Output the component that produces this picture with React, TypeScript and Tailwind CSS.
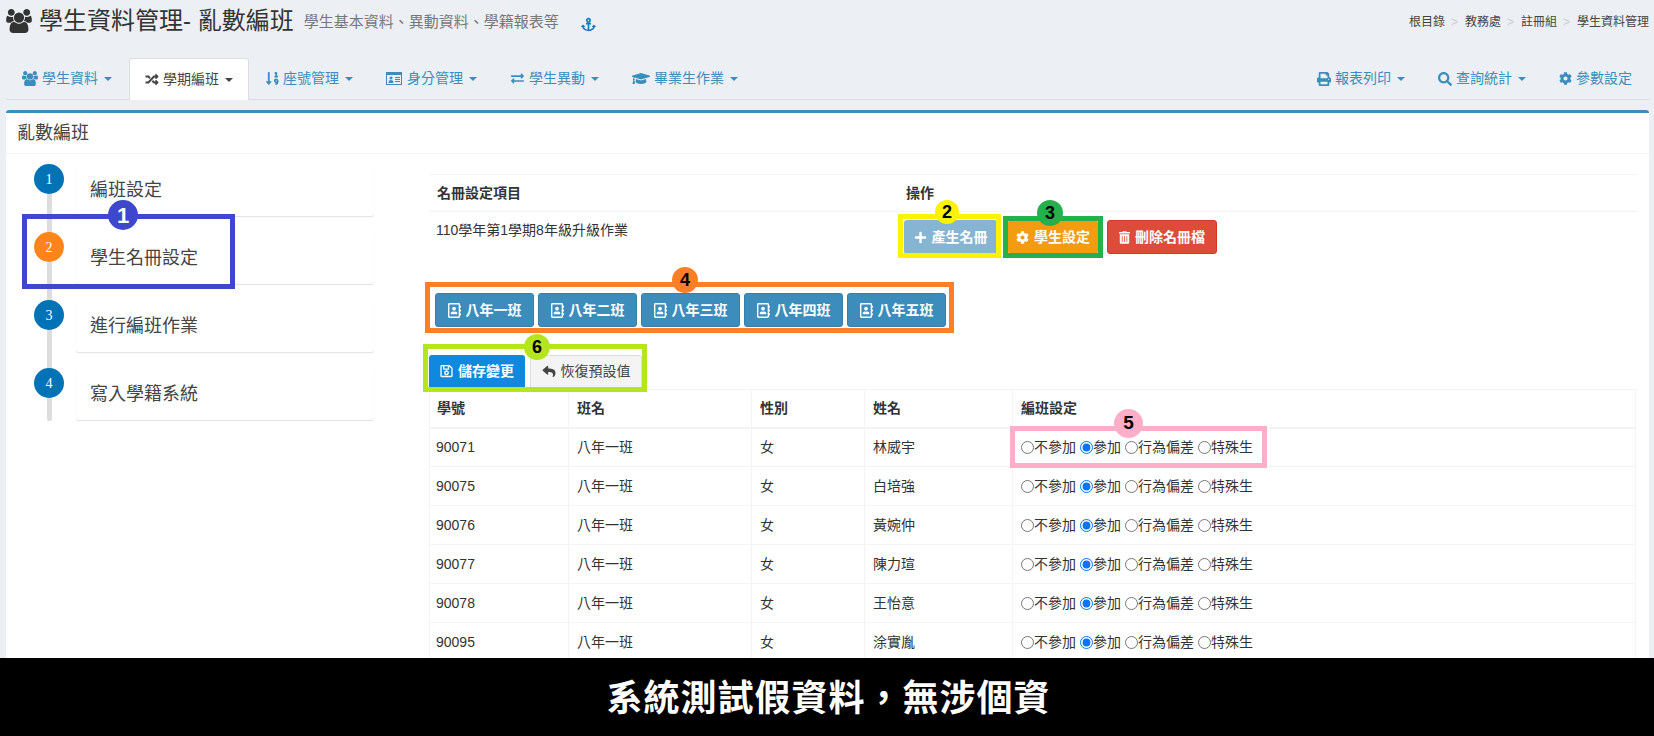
import { ReactNode } from "react";
import {
  FaAnchor,
  FaCog,
  FaExchangeAlt,
  FaGraduationCap,
  FaPlus,
  FaPrint,
  FaRandom,
  FaRegAddressBook,
  FaRegSave,
  FaReply,
  FaSearch,
  FaSortNumericDown,
  FaTrashAlt,
} from "react-icons/fa";

const FONT =
  "font-['Liberation_Sans','Noto_Sans_CJK_TC',sans-serif]";

// Font Awesome 4 風格的 users 圖示
const UsersIcon = ({ className }: { className: string }) => (
  <svg viewBox="0 0 1920 1792" fill="currentColor" className={className}>
    <path d="M593 896q-162 5-265 128h-134q-82 0-138-40.5t-56-118.5q0-353 124-353 6 0 43.5 21t97.5 42.5 119 21.5q67 0 133-23-5 37-5 66 0 139 81 256zm1071 637q0 120-73 189.5t-194 69.5h-874q-121 0-194-69.5t-73-189.5q0-53 3.5-103.5t14-109 26.5-108.5 43-97.5 62-81 85.5-53.5 111.5-20q10 0 43 21.5t73 48 107 48 135 21.5 135-21.5 107-48 73-48 43-21.5q61 0 111.5 20t85.5 53.5 62 81 43 97.5 26.5 108.5 14 109 3.5 103.5zm-1024-1277q0 106-75 181t-181 75-181-75-75-181 75-181 181-75 181 75 75 181zm704 384q0 159-112.5 271.5t-271.5 112.5-271.5-112.5-112.5-271.5 112.5-271.5 271.5-112.5 271.5 112.5 112.5 271.5zm576 225q0 78-56 118.5t-138 40.5h-134q-103-123-265-128 81-117 81-256 0-29-5-66 66 23 133 23 59 0 119-21.5t97.5-42.5 43.5-21q124 0 124 353zm-128-609q0 106-75 181t-181 75-181-75-75-181 75-181 181-75 181 75 75 181z" />
  </svg>
);

const IdCardIcon = ({ className }: { className: string }) => (
  <svg viewBox="0 0 16 13" fill="currentColor" className={className}>
    <rect x="0.5" y="0.5" width="15" height="12" fill="none" stroke="currentColor" />
    <rect x="1" y="1" width="14" height="2" />
    <circle cx="5" cy="6" r="1.5" />
    <path d="M2.5 11c0-2 1-3 2.5-3s2.5 1 2.5 3z" />
    <rect x="9" y="5" width="5" height="1" />
    <rect x="9" y="7" width="5" height="1" />
    <rect x="9" y="9" width="5" height="1" />
  </svg>
);

const leftTabs = [
  { label: "學生資料", icon: <UsersIcon className="w-[16px] h-[15px]" /> },
  { label: "學期編班", icon: <FaRandom className="w-[14px] h-[13px]" />, active: true },
  { label: "座號管理", icon: <FaSortNumericDown className="w-[13px] h-[17px]" /> },
  { label: "身分管理", icon: <IdCardIcon className="w-[16px] h-[13px] mr-[1px]" /> },
  { label: "學生異動", icon: <FaExchangeAlt className="w-[15px] h-[13px]" /> },
  { label: "畢業生作業", icon: <FaGraduationCap className="w-[18px] h-[15px]" /> },
];

const rightTabs = [
  { label: "報表列印", icon: <FaPrint className="w-[14px] h-[14px]" />, caret: true },
  { label: "查詢統計", icon: <FaSearch className="w-[14px] h-[14px]" />, caret: true },
  { label: "參數設定", icon: <FaCog className="w-[13px] h-[13px]" /> },
];

const steps = [
  { n: 1, label: "編班設定" },
  { n: 2, label: "學生名冊設定", current: true },
  { n: 3, label: "進行編班作業" },
  { n: 4, label: "寫入學籍系統" },
];

const classes = ["八年一班", "八年二班", "八年三班", "八年四班", "八年五班"];

const students = [
  { id: "90071", name: "林威宇" },
  { id: "90075", name: "白培強" },
  { id: "90076", name: "黃婉仲" },
  { id: "90077", name: "陳力瑄" },
  { id: "90078", name: "王怡意" },
  { id: "90095", name: "涂實胤" },
];

const radioOptions = ["不參加", "參加", "行為偏差", "特殊生"];

const Caret = () => (
  <span className="ml-[2px] w-0 h-0 border-x-4 border-t-4 border-x-transparent border-t-current" />
);

const Tab = ({
  label,
  icon,
  active,
  caret,
}: {
  label: string;
  icon: ReactNode;
  active?: boolean;
  caret?: boolean;
}) => (
  <div
    className={
      active
        ? "flex items-center h-[42px] px-[15px] gap-[4px] bg-white text-[#444] border-x border-t border-[#ddd] rounded-t-[3px] -mx-px"
        : "flex items-center h-[41px] px-[15px] gap-[4px] text-[#3c8dbc]"
    }
  >
    {icon}
    <span className="text-[14px]">{label}</span>
    {caret && <Caret />}
  </div>
);

const Btn = ({
  className,
  icon,
  children,
}: {
  className: string;
  icon: ReactNode;
  children: ReactNode;
}) => (
  <div
    className={`flex items-center justify-center gap-[5px] rounded-[3px] text-white text-[14px] font-bold ${className}`}
  >
    {icon}
    <span>{children}</span>
  </div>
);

export default function App() {
  return (
    <div className={`relative w-[1654px] h-[736px] overflow-hidden flex flex-col bg-[#ecf0f5] text-[#333] ${FONT}`}>
      <div className="flex-1 min-h-0 flex flex-col pl-[6px] pr-[5px]">
        <header className="h-[58px] shrink-0 flex items-start justify-between">
          <div className="flex items-center h-[42px]">
            <UsersIcon className="w-[26px] h-[24px] text-[#333]" />
            <h1 className="ml-[7px] text-[24px] leading-[30px]">學生資料管理- 亂數編班</h1>
            <span className="ml-[10px] mt-[3px] text-[15px] text-[#777]">學生基本資料、異動資料、學籍報表等</span>
            <FaAnchor className="ml-[22px] mt-[6px] w-[15px] h-[15px] text-[#1f7ab8]" />
          </div>
          <div className="flex items-center h-[44px] text-[12px] text-[#444]">
            <span>根目錄</span>
            <span className="mx-[6px] w-[8px] text-[#ccc]">&gt;</span>
            <span>教務處</span>
            <span className="mx-[6px] w-[8px] text-[#ccc]">&gt;</span>
            <span>註冊組</span>
            <span className="mx-[6px] w-[8px] text-[#ccc]">&gt;</span>
            <span>學生資料管理</span>
          </div>
        </header>

        <nav className="h-[42px] shrink-0 flex justify-between items-start border-b border-[#ddd] pl-[1px] pr-[2px]">
          <div className="flex gap-[3px]">
            {leftTabs.map((t) => (
              <Tab key={t.label} label={t.label} icon={t.icon} active={t.active} caret />
            ))}
          </div>
          <div className="flex gap-[3px]">
            {rightTabs.map((t) => (
              <Tab key={t.label} label={t.label} icon={t.icon} caret={t.caret} />
            ))}
          </div>
        </nav>

        <section className="mt-[10px] flex-1 min-h-0 flex flex-col overflow-hidden bg-white border-t-[3px] border-[#3c8dbc] rounded-t-[3px]">
          <div className="h-[41px] shrink-0 flex items-center pl-[11px] text-[18px] text-[#444] border-b border-[#f4f4f4]">
            亂數編班
          </div>

          <div className="flex flex-1 min-h-0">
            <div className="w-[423px] shrink-0 pt-[10px]">
              <div className="relative flex flex-col gap-[16px] pl-[28px]">
                <div className="absolute left-[41px] top-[15px] w-[5px] h-[242px] bg-[#ddd] rounded-b-[2px]" />
                {steps.map((s) => (
                  <div key={s.n} className="relative flex">
                    <div
                      className={
                        s.current
                          ? "w-[30px] h-[30px] rounded-full bg-[#ff851b] text-white flex items-center justify-center text-[14px] font-['Liberation_Serif',serif]"
                          : "w-[30px] h-[30px] rounded-full bg-[#0073b7] text-white flex items-center justify-center text-[14px] font-['Liberation_Serif',serif]"
                      }
                    >
                      {s.n}
                    </div>
                    <div className="ml-[12px] w-[298px] h-[52px] flex items-center pl-[14px] text-[18px] text-[#444] bg-white rounded-[3px] shadow-[0_1px_1px_rgba(0,0,0,0.12)]">
                      {s.label}
                    </div>
                  </div>
                ))}
              </div>
            </div>

            <div className="flex-1 min-w-0 pt-[20px] pr-[11px]">
              <div className="border-t border-[#f4f4f4]">
                <div className="flex h-[37px] items-center border-b border-[#f4f4f4] text-[14px] font-bold">
                  <div className="w-[469px] pl-[8px]">名冊設定項目</div>
                  <div className="pl-[8px]">操作</div>
                </div>
                <div className="flex h-[53px] text-[14px]">
                  <div className="w-[469px] pl-[7px] pt-[8px] leading-[20px]">110學年第1學期8年級升級作業</div>
                  <div className="flex pl-[6px] pt-[8px]">
                    <Btn className="w-[93px] h-[34px] bg-[#86b5d3]" icon={<FaPlus className="w-[13px] h-[13px]" />}>產生名冊</Btn>
                    <Btn className="ml-[11px] w-[90px] h-[34px] bg-[#f39c12]" icon={<FaCog className="w-[13px] h-[13px]" />}>學生設定</Btn>
                    <Btn className="ml-[9px] w-[110px] h-[34px] bg-[#dd4b39] border border-[#d73925]" icon={<FaTrashAlt className="w-[11px] h-[13px]" />}>刪除名冊檔</Btn>
                  </div>
                </div>
              </div>

              <div className="flex gap-[4px] mt-[28px] ml-[6px]">
                {classes.map((c) => (
                  <Btn
                    key={c}
                    className="w-[99px] h-[34px] bg-[#3c8dbc] border border-[#367fa9]"
                    icon={<FaRegAddressBook className="w-[13px] h-[15px]" />}
                  >
                    {c}
                  </Btn>
                ))}
              </div>

              <div className="flex gap-[5px] mt-[28px] mb-[2px] h-[32px]">
                <Btn className="w-[96px] h-[32px] bg-[#0f88de] rounded-b-none" icon={<FaRegSave className="w-[13px] h-[14px]" />}>儲存變更</Btn>
                <div className="w-[112px] h-[32px] flex items-center justify-center gap-[5px] bg-[#f4f4f4] border border-[#ddd] border-b-0 rounded-t-[3px] text-[14px] text-[#444]">
                  <FaReply className="w-[14px] h-[13px]" />
                  <span>恢復預設值</span>
                </div>
              </div>

              <table className="w-[1207px] table-fixed border-collapse text-[14px]">
                <colgroup>
                  <col className="w-[139px]" />
                  <col className="w-[183px]" />
                  <col className="w-[113px]" />
                  <col className="w-[148px]" />
                  <col />
                </colgroup>
                <thead>
                  <tr className="h-[38px]">
                    <th className="border border-[#f4f4f4] border-b-2 text-left font-bold pl-[7px]">學號</th>
                    {["班名", "性別", "姓名", "編班設定"].map((h) => (
                      <th key={h} className="border border-[#f4f4f4] border-b-2 text-left font-bold pl-[8px]">{h}</th>
                    ))}
                  </tr>
                </thead>
                <tbody>
                  {students.map((s) => (
                    <tr key={s.id} className="h-[39px]">
                      <td className="border border-[#f4f4f4] pl-[6px]">{s.id}</td>
                      <td className="border border-[#f4f4f4] pl-[8px]">八年一班</td>
                      <td className="border border-[#f4f4f4] pl-[8px]">女</td>
                      <td className="border border-[#f4f4f4] pl-[8px]">{s.name}</td>
                      <td className="border border-[#f4f4f4] pl-[8px]">
                        <div className="flex gap-[4px] items-center">
                          {radioOptions.map((o) => (
                            <label key={o} className="flex items-center">
                              <input type="radio" name={s.id} defaultChecked={o === "參加"} className="w-[13px] h-[13px]" />
                              <span>{o}</span>
                            </label>
                          ))}
                        </div>
                      </td>
                    </tr>
                  ))}
                </tbody>
              </table>
            </div>
          </div>
        </section>
      </div>

      <footer className="h-[78px] shrink-0 pt-[3px] pl-[3px] bg-black flex items-center justify-center text-white text-[36px] font-bold tracking-[1px]">
        系統測試假資料，無涉個資
      </footer>

      {/* 標註框 */}
      <div className="absolute left-[22px] top-[214px] w-[213px] h-[75px] border-[5px] border-[#3f48cc]" />
      <div className="absolute left-[898px] top-[214px] w-[103px] h-[44px] border-[5px] border-[#fff200]" />
      <div className="absolute left-[1003px] top-[216px] w-[100px] h-[42px] border-[5px] border-[#22b14c]" />
      <div className="absolute left-[425px] top-[282px] w-[529px] h-[51px] border-[5px] border-[#ff7f27]" />
      <div className="absolute left-[1010px] top-[426px] w-[257px] h-[42px] border-[5px] border-[#ffaec9]" />
      <div className="absolute left-[423px] top-[344px] w-[224px] h-[48px] border-[5px] border-[#b5e61d]" />

      <div className="absolute left-[108px] top-[200px] w-[30px] h-[30px] rounded-full bg-[#3f48cc] text-white flex items-center justify-center text-[22px] font-bold">1</div>
      <div className="absolute left-[935px] top-[200px] w-[24px] h-[24px] rounded-full bg-[#fff200] text-black flex items-center justify-center text-[18px] font-bold">2</div>
      <div className="absolute left-[1037px] top-[200px] w-[26px] h-[26px] rounded-full bg-[#22b14c] text-black flex items-center justify-center text-[18px] font-bold">3</div>
      <div className="absolute left-[672px] top-[267px] w-[26px] h-[26px] rounded-full bg-[#ff7f27] text-black flex items-center justify-center text-[18px] font-bold">4</div>
      <div className="absolute left-[1114px] top-[409px] w-[29px] h-[29px] rounded-full bg-[#ffaec9] text-black flex items-center justify-center text-[19px] font-bold">5</div>
      <div className="absolute left-[524px] top-[334px] w-[26px] h-[26px] rounded-full bg-[#b5e61d] text-black flex items-center justify-center text-[18px] font-bold">6</div>
    </div>
  );
}
